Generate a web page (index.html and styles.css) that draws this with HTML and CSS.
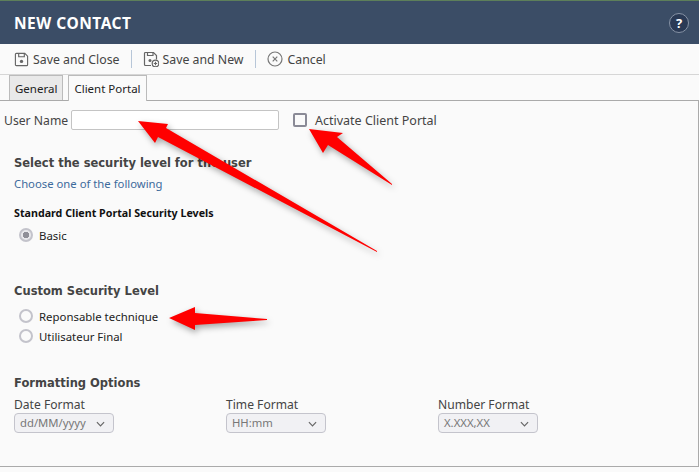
FILE: index.html
```html
<!DOCTYPE html>
<html lang="en">
<head>
<meta charset="utf-8">
<title>New Contact</title>
<link rel="stylesheet" href="styles.css">
</head>
<body>
<div class="app">
  <header class="titlebar">
    <h1 class="title">NEW CONTACT</h1>
    <span class="help">?</span>
  </header>
  <nav class="toolbar">
    <span class="tool">
      <svg class="icon" viewBox="0 0 16 16"><path d="M2.5 1.5h9l3 3v9a1 1 0 0 1-1 1h-11a1 1 0 0 1-1-1v-11a1 1 0 0 1 1-1z" fill="none" stroke="#666" stroke-width="1.2"/><path d="M5 1.5v3.5h6v-3.5" fill="none" stroke="#666" stroke-width="1.2"/><circle cx="8" cy="10" r="1.8" fill="#666"/></svg>
      Save and Close
    </span>
    <span class="sep"></span>
    <span class="tool">
      <svg class="icon wide" viewBox="0 0 16 16"><path d="M8 14.5h-5.500a1 1 0 0 1-1-1v-11a1 1 0 0 1 1-1h8l3 3v4" fill="none" stroke="#666" stroke-width="1.2"/><path d="M4.500 1.500v3h5.500v-3" fill="none" stroke="#666" stroke-width="1.2"/><circle cx="7" cy="9.500" r="1.500" fill="#666"/><circle cx="12.500" cy="12.500" r="3.300" fill="#fafafa" stroke="#666" stroke-width="1.200"/><path d="M12.500 10.800v3.400M10.800 12.500h3.400" stroke="#666" stroke-width="1.100"/></svg>
      Save and New
    </span>
    <span class="sep"></span>
    <span class="tool loose">
      <svg class="icon wide" viewBox="0 0 16 16"><circle cx="8" cy="8" r="7" fill="none" stroke="#777" stroke-width="1.200"/><path d="M5.700 5.700l4.600 4.600M10.300 5.700l-4.600 4.600" stroke="#777" stroke-width="1.200"/></svg>
      Cancel
    </span>
  </nav>
  <div class="tabs">
    <span class="tab">General</span>
    <span class="tab active">Client Portal</span>
  </div>
  <main class="panel">
    <div class="user-row">
      <label class="user-label">User Name</label>
      <input class="user-input" type="text">
      <span class="check"></span>
      <span class="check-label">Activate Client Portal</span>
    </div>
    <h2 class="heading first">Select the security level for the user</h2>
    <p class="hint">Choose one of the following</p>
    <h3 class="subheading">Standard Client Portal Security Levels</h3>
    <div class="radio-row basic"><span class="radio checked"></span><span>Basic</span></div>
    <h2 class="heading custom">Custom Security Level</h2>
    <div class="radio-row wide first-radio"><span class="radio"></span><span>Reponsable technique</span></div>
    <div class="radio-row wide"><span class="radio"></span><span>Utilisateur Final</span></div>
    <h2 class="heading formatting">Formatting Options</h2>
    <div class="formats">
      <div class="format">
        <div class="format-label">Date Format</div>
        <div class="select">dd/MM/yyyy<svg class="chev" viewBox="0 0 10 6"><path d="M1 1l4 4 4-4" fill="none" stroke="#666" stroke-width="1.300"/></svg></div>
      </div>
      <div class="format">
        <div class="format-label">Time Format</div>
        <div class="select">HH:mm<svg class="chev" viewBox="0 0 10 6"><path d="M1 1l4 4 4-4" fill="none" stroke="#666" stroke-width="1.300"/></svg></div>
      </div>
      <div class="format">
        <div class="format-label">Number Format</div>
        <div class="select">X.XXX,XX<svg class="chev" viewBox="0 0 10 6"><path d="M1 1l4 4 4-4" fill="none" stroke="#666" stroke-width="1.300"/></svg></div>
      </div>
    </div>
  </main>
  <svg class="arrows" viewBox="0 0 699 472" aria-hidden="true">
    <polygon points="138,121 168,124 166,128 377,251 377,252 158,137 155,143"/>
    <polygon points="309,129 343,133 337,137 392,184 392,185 328,145 323,153"/>
    <polygon points="169,318 195,307 195,313 267,319 267,320 195,325 195,330"/>
  </svg>
</div>
</body>
</html>
```
FILE: styles.css
```css
* { box-sizing: border-box; }
html, body { margin: 0; padding: 0; }
body {
  width: 699px;
  height: 472px;
  overflow: hidden;
  background: #fafafa;
  font-family: "Noto Sans", "Open Sans", sans-serif;
  font-size: 12.200px;
  color: #333;
}
.app { position: relative; width: 699px; height: 472px; }

.titlebar {
  height: 44px;
  background: #3b4d66;
  border-top: 1px solid #5d7f5a;
  display: flex;
  align-items: center;
  justify-content: space-between;
  padding: 0 10px 0 14px;
}
.title {
  margin: 0;
  font-size: 15.500px;
  font-weight: 700;
  letter-spacing: 0.500px;
  color: #fff;
}
.help {
  width: 20px;
  height: 20px;
  border-radius: 50%;
  background: #2a3a55;
  border: 1px solid #8793a5;
  color: #fff;
  font-size: 13px;
  font-weight: 700;
  line-height: 18px;
  text-align: center;
}

.toolbar {
  height: 31px;
  display: flex;
  align-items: center;
  padding: 0 0 0 14px;
  border-bottom: 1px solid #d6d6d6;
  color: #444;
}
.tool { display: flex; align-items: center; gap: 4px; font-size: 12.300px; }
.tool.loose { gap: 5px; }
.icon { width: 15px; height: 15px; flex: none; }
.icon.wide { width: 16px; height: 16px; }
.sep { width: 1px; height: 18px; background: #b7c6d8; margin: 0 11px; }

.tabs {
  height: 25px;
  display: flex;
  gap: 5px;
  padding-left: 9px;
  align-items: flex-end;
}
.tab {
  height: 25px;
  padding: 0 5px;
  display: flex;
  align-items: center;
  font-size: 11.500px;
  color: #222;
  background: #e9e9e9;
  border: 1px solid #bbb;
  border-bottom: 0;
}
.tab.active {
  width: 79px;
  background: #fafafa;
  padding: 0 5px;
  position: relative;
  top: 1px;
  height: 26px;
  z-index: 1;
}

.panel {
  height: 367px;
  border: 1px solid #aaa;
  border-left: 0;
  padding: 0 0 0 14px;
}
.user-row {
  display: flex;
  align-items: center;
  height: 20px;
  margin: 9px 0 0 -10px;
}
.user-label { width: 67px; color: #444; font-size: 12.200px; }
.user-input {
  width: 208px;
  height: 20px;
  border: 1px solid #c4c4c4;
  border-radius: 2px;
  background: #fff;
  padding: 0;
  margin: 0;
}
.check {
  width: 14px;
  height: 14px;
  margin-left: 14px;
  border: 2px solid #8a8a96;
  border-radius: 2px;
  background: #fafafa;
}
.check-label { margin-left: 8px; color: #444; font-size: 12.500px; }

.heading {
  margin: 0;
  font-family: "DejaVu Sans", sans-serif;
  font-size: 11.500px;
  font-weight: 700;
  line-height: 16px;
  color: #444;
}
.first { margin-top: 25px; }
.hint { margin: 5px 0 0; line-height: 16px; font-size: 11.300px; color: #3d6a9c; }
.subheading {
  margin: 13px 0 0;
  font-size: 10.700px;
  font-weight: 700;
  line-height: 16px;
  color: #111;
}
.radio-row {
  display: flex;
  align-items: center;
  gap: 6px;
  height: 20px;
  padding-left: 5px;
  font-size: 11.400px;
  color: #222;
}
.radio-row.basic { margin-top: 4px; }
.radio {
  width: 14px;
  height: 14px;
  border-radius: 50%;
  border: 2px solid #c3c3cb;
  background: #fafafa;
  flex: none;
}
.radio.checked { background: radial-gradient(circle, #8f8f98 0 3px, #e8e8ec 3.500px); }
.custom { margin-top: 38px; }
.first-radio { margin-top: 7px; }
.formatting { margin-top: 29px; }

.formats { display: flex; margin-top: 6px; }
.format { width: 212px; }
.format-label { font-size: 12.100px; line-height: 16px; color: #444; }
.select {
  position: relative;
  width: 100px;
  height: 20px;
  border: 1px solid #c4c4cc;
  border-radius: 4px;
  background: #f1f1f4;
  padding-left: 5px;
  font-size: 11.300px;
  line-height: 18px;
  color: #777;
}
.chev { position: absolute; right: 8px; top: 7px; width: 9px; height: 6px; }

.arrows {
  position: absolute;
  left: 0;
  top: 0;
  width: 699px;
  height: 472px;
  pointer-events: none;
  z-index: 5;
  filter: drop-shadow(2px 3px 3px rgba(0,0,0,.35));
}
.arrows polygon { fill: #f00; }
```
